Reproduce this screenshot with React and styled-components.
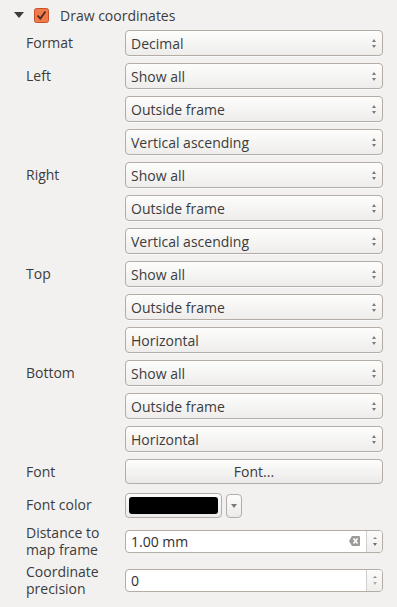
import styled, { createGlobalStyle } from 'styled-components';

const GlobalStyle = createGlobalStyle`
  html, body {
    margin: 0;
    padding: 0;
    background: #f2f1f0;
  }
  body {
    font-family: "Open Sans", "DejaVu Sans", sans-serif;
    font-size: 14px;
    color: #3c3c3c;
  }
`;

const Panel = styled.div`
  width: 397px;
  height: 607px;
  box-sizing: border-box;
  background: #f2f1f0;
  overflow: hidden;
`;

const Header = styled.div`
  display: flex;
  align-items: center;
  height: 30px;
  padding-left: 14px;
  gap: 10px;
`;

const Title = styled.span`
  margin-left: 1px;
`;

const Form = styled.div`
  display: grid;
  grid-template-columns: 99px 1fr;
  row-gap: 7px;
  padding: 0 14px 0 26px;
`;

const Label = styled.div`
  line-height: ${p => (p.$two ? '17px' : '26px')};
  align-self: ${p => (p.$two ? 'center' : 'start')};
  margin: ${p => (p.$two ? '-1px 0' : '0')};
  white-space: nowrap;
`;

const Stack = styled.div`
  display: flex;
  flex-direction: column;
  gap: 7px;
  align-self: center;
`;

const boxBase = `
  box-sizing: border-box;
  border: 1px solid #b3ada6;
  border-radius: 4px;
`;

const Combo = styled.div`
  ${boxBase}
  height: 26px;
  display: flex;
  align-items: center;
  justify-content: space-between;
  padding: 0 6px 0 5px;
  background: linear-gradient(#fdfdfc, #eeedeb);
  box-shadow: 0 1px 0 rgba(255, 255, 255, 0.6);
`;

const Arrows = styled.div`
  display: flex;
  flex-direction: column;
  align-items: center;
  gap: 3px;
`;

const Tri = styled.div`
  width: 0;
  height: 0;
  border-left: ${p => p.$w || 3}px solid transparent;
  border-right: ${p => p.$w || 3}px solid transparent;
  ${p => (p.$up ? 'border-bottom' : 'border-top')}: ${p => p.$h || 3}px solid ${p => p.$color || '#7d7a76'};
`;

const Button = styled.div`
  ${boxBase}
  height: 25px;
  display: flex;
  align-items: center;
  justify-content: center;
  background: linear-gradient(#fdfdfc, #ebeae8);
`;

const ColorRow = styled.div`
  display: flex;
  align-items: center;
  gap: 4px;
`;

const ColorButton = styled.div`
  ${boxBase}
  width: 97px;
  height: 25px;
  padding: 3px;
  background: linear-gradient(#fdfdfc, #ebeae8);
`;

const Swatch = styled.div`
  width: 100%;
  height: 100%;
  border-radius: 3px;
  background: ${p => p.$color};
`;

const DropButton = styled.div`
  ${boxBase}
  width: 16px;
  height: 24px;
  margin-top: 1px;
  display: flex;
  align-items: center;
  justify-content: center;
  background: linear-gradient(#fdfdfc, #ebeae8);
`;

const SpinBox = styled.div`
  ${boxBase}
  height: 23px;
  display: flex;
  background: #fff;
  overflow: hidden;
`;

const SpinText = styled.div`
  flex: 1;
  display: flex;
  align-items: center;
  justify-content: space-between;
  padding: 0 6px 0 5px;
  color: #2e2e2e;
`;

const SpinButtons = styled.div`
  width: 15px;
  border-left: 1px solid #d3cfca;
  background: linear-gradient(#fbfbfa, #efeeec);
  display: flex;
  flex-direction: column;
  align-items: center;
  justify-content: center;
  gap: 4px;
`;

const Combos = ({ items }) => (
  <Stack>
    {items.map((t, i) => (
      <Combo key={i}>
        <span>{t}</span>
        <Arrows>
          <Tri $up $w={2.5} $h={3} />
          <Tri $w={2.5} $h={3} />
        </Arrows>
      </Combo>
    ))}
  </Stack>
);

const ClearIcon = () => (
  <svg width="11" height="10" viewBox="0 0 11 10">
    <path d="M3 0 H10 a1 1 0 0 1 1 1 V9 a1 1 0 0 1 -1 1 H3 L0 5 Z" fill="#9d9a97" />
    <path d="M4.5 2.5 L8.5 7.5 M8.5 2.5 L4.5 7.5" stroke="#fff" strokeWidth="1.6" />
  </svg>
);

const Checkbox = () => (
  <svg width="15" height="15" viewBox="0 0 15 15">
    <rect x="0.5" y="0.5" width="14" height="14" rx="2" fill="#f07a4a" stroke="#c9502a" />
    <path d="M3.5 7.5 L6.3 10.5 L11.5 3.5" stroke="#4b2a1e" strokeWidth="1.8" fill="none" />
  </svg>
);

const sides = [
  ['Left', 'Vertical ascending'],
  ['Right', 'Vertical ascending'],
  ['Top', 'Horizontal'],
  ['Bottom', 'Horizontal'],
];

export default function App() {
  return (
    <Panel>
      <GlobalStyle />
      <Header>
        <Tri $w={5} $h={6} $color="#3c3c3c" />
        <Checkbox />
        <Title>Draw coordinates</Title>
      </Header>
      <Form>
        <Label>Format</Label>
        <Combos items={['Decimal']} />

        {sides.map(([name, dir]) => [
          <Label key={name + 'l'}>{name}</Label>,
          <Combos key={name + 'c'} items={['Show all', 'Outside frame', dir]} />,
        ])}

        <Label>Font</Label>
        <Button>Font...</Button>

        <Label>Font color</Label>
        <ColorRow>
          <ColorButton>
            <Swatch $color="#000" />
          </ColorButton>
          <DropButton>
            <Tri $w={3.5} $h={4} $color="#7d7a76" />
          </DropButton>
        </ColorRow>

        <Label $two>Distance to<br />map frame</Label>
        <Stack>
          <SpinBox>
            <SpinText>
              <span>1.00 mm</span>
              <ClearIcon />
            </SpinText>
            <SpinButtons>
              <Tri $up $w={2} $h={2} $color="#8a8783" />
              <Tri $w={2.5} $h={3} $color="#6f6c69" />
            </SpinButtons>
          </SpinBox>
        </Stack>

        <Label $two>Coordinate<br />precision</Label>
        <Stack>
          <SpinBox>
            <SpinText>
              <span>0</span>
            </SpinText>
            <SpinButtons>
              <Tri $up $w={2} $h={2} $color="#8a8783" />
              <Tri $w={2.5} $h={3} $color="#b3b0ac" />
            </SpinButtons>
          </SpinBox>
        </Stack>
      </Form>
    </Panel>
  );
}
